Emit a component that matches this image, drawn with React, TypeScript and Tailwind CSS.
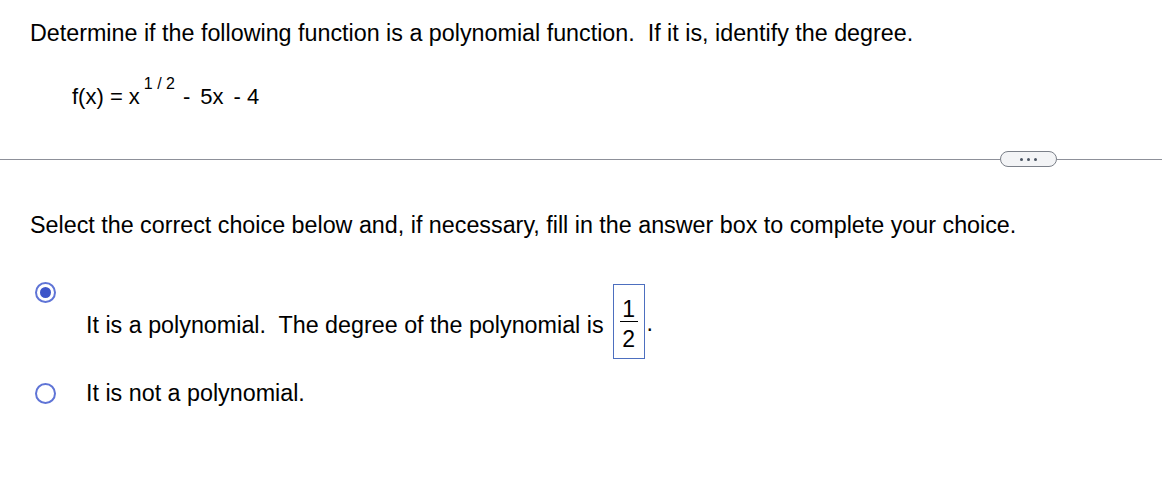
import React from "react";

export default function App() {
  return (
    <div
      className="w-[1162px] h-[492px] bg-white text-black overflow-hidden"
      style={{ fontFamily: '"Liberation Sans", Arial, sans-serif' }}
    >
      <div className="pl-[30px] pt-[20px]">
        <p className="text-[23.3px] leading-[26px]">
          Determine if the following function is a polynomial function.&nbsp; If it is, identify the degree.
        </p>
      </div>
      <div className="pl-[72px] mt-[39px] flex items-start text-[22px] leading-[24px] h-[24px]">
        <span className="whitespace-pre">f(x) = x</span>
        <span className="text-[16px] leading-[16px] whitespace-pre -mt-[9px] ml-[4px]">1 / 2</span>
        <span className="ml-[8px]">-</span>
        <span className="ml-[10px]">5x</span>
        <span className="ml-[10px]">-</span>
        <span className="ml-[6px]">4</span>
      </div>

      <div className="mt-[42px] flex items-center">
        <div className="flex-1 h-px bg-[#8d9099]" />
        <div className="w-[57px] h-[16px] rounded-full border border-[#7b8089] bg-[#f3f4f6] flex items-center justify-center gap-[4px]">
          <span className="w-[3px] h-[3px] rounded-full bg-[#4b5563]" />
          <span className="w-[3px] h-[3px] rounded-full bg-[#4b5563]" />
          <span className="w-[3px] h-[3px] rounded-full bg-[#4b5563]" />
        </div>
        <div className="w-[105px] h-px bg-[#8d9099]" />
      </div>

      <div className="pl-[30px] mt-[45px]">
        <p className="text-[23.3px] leading-[26px]">
          Select the correct choice below and, if necessary, fill in the answer box to complete your choice.
        </p>
      </div>

      <div className="mt-[44px] pl-[35px] flex items-start">
        <div className="w-[21px] h-[21px] rounded-full border-2 border-[#5f74d6] flex items-center justify-center shrink-0">
          <div className="w-[11px] h-[11px] rounded-full bg-[#3d55c9]" />
        </div>
        <div className="ml-[30px] flex items-start text-[23.3px] leading-[26px]">
          <span className="mt-[30px]">It is a polynomial.&nbsp; The degree of the polynomial is</span>
          <div className="ml-[9px] mt-[2px] w-[32px] h-[75px] border border-[#4d6fbf] flex flex-col items-center text-[23px] leading-[22px]">
            <span className="mt-[13px]">1</span>
            <div className="w-[18px] h-px bg-black mt-[1px]" />
            <span className="mt-[6px]">2</span>
          </div>
          <span className="ml-[2px] mt-[28px]">.</span>
        </div>
      </div>

      <div className="mt-[21px] pl-[35px] flex items-center">
        <div className="w-[21px] h-[21px] rounded-full border-2 border-[#5f74d6] shrink-0" />
        <span className="ml-[30px] text-[23.3px] leading-[26px]">It is not a polynomial.</span>
      </div>
    </div>
  );
}
